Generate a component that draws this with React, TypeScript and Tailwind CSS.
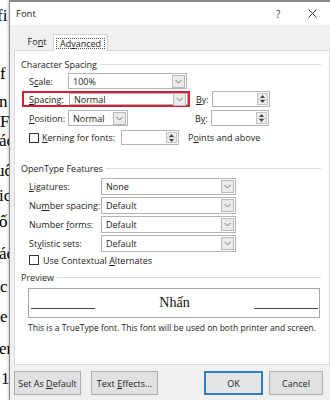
import React from "react";

const U = ({ children }: { children: React.ReactNode }) => (
  <span className="underline underline-offset-[1px]">{children}</span>
);

function Chevron() {
  return (
    <svg width="7" height="5" viewBox="0 0 7 5" className="block">
      <polyline points="0.5,1 3.5,4 6.5,1" fill="none" stroke="#777" strokeWidth="1" />
    </svg>
  );
}

function Combo({ w, text }: { w: string; text: string }) {
  return (
    <div className={`${w} h-full flex items-center border border-[#b4b4b4] bg-white`}>
      <div className="flex-1 pl-[4px] text-[#222]">{text}</div>
      <div className="h-[13px] w-[13px] mr-[1px] flex items-center justify-center border border-[#b9b9b9] bg-[#eaeaea]">
        <Chevron />
      </div>
    </div>
  );
}

function Spin({ w }: { w: string }) {
  return (
    <div className={`${w} h-full flex border border-[#b4b4b4] bg-white`}>
      <div className="flex-1" />
      <div className="w-[11px] my-[1px] mr-[1px] flex flex-col border border-[#c4c4c4] bg-[#ececec]">
        <div className="flex-1 flex items-center justify-center border-b border-[#c8c8c8]">
          <svg width="5" height="3" viewBox="0 0 5 3"><polygon points="0,3 2.5,0 5,3" fill="#444" /></svg>
        </div>
        <div className="flex-1 flex items-center justify-center">
          <svg width="5" height="3" viewBox="0 0 5 3"><polygon points="0,0 2.5,3 5,0" fill="#444" /></svg>
        </div>
      </div>
    </div>
  );
}

function Check() {
  return <div className="w-[10px] h-[10px] border border-[#333] bg-white shrink-0" />;
}

function GroupTitle({ children }: { children: React.ReactNode }) {
  return (
    <div className="flex items-center h-[12px] pl-[6px] pr-[8px]">
      <span className="text-[#1e1e1e]">{children}</span>
      <div className="flex-1 ml-[3px] h-px bg-[#dcdcdc]" />
    </div>
  );
}

function Btn({ children, w, primary }: { children: React.ReactNode; w: string; primary?: boolean }) {
  return (
    <div
      className={`${w} h-[24px] flex items-center justify-center text-[#1e1e1e] ${
        primary ? "border-2 border-[#2f7fbf] bg-[#e5e5e5]" : "border border-[#adadad] bg-[#e1e1e1]"
      }`}
    >
      <span className="whitespace-nowrap">{children}</span>
    </div>
  );
}

const docLines: { t: string; h: string; ml: string }[] = [
  { t: "fi", h: "h-[22px]", ml: "-ml-[3px]" },
  { t: "f", h: "h-[58px]", ml: "ml-0" },
  { t: "n :", h: "h-[28px]", ml: "-ml-[1px]" },
  { t: "Fo", h: "h-[20px]", ml: "ml-0" },
  { t: "ác", h: "h-[19px]", ml: "-ml-[1px]" },
  { t: "uô", h: "h-[30px]", ml: "-ml-[4px]" },
  { t: "ic", h: "h-[25px]", ml: "-ml-[1px]" },
  { t: "ố", h: "h-[26px]", ml: "-ml-[1px]" },
  { t: "ác", h: "h-[32px]", ml: "-ml-[1px]" },
  { t: "c", h: "h-[33px]", ml: "ml-0" },
  { t: "e", h: "h-[30px]", ml: "ml-0" },
  { t: "er", h: "h-[32px]", ml: "-ml-[1px]" },
  { t: "1", h: "h-[30px]", ml: "ml-[1px]" },
];

export default function App() {
  return (
    <div
      className="w-[330px] h-[400px] overflow-hidden bg-white flex text-[9px] leading-none"
      style={{ fontFamily: "'Open Sans', 'Noto Sans', sans-serif" }}
    >
      {/* document behind */}
      <div
        className="w-[9px] shrink-0 overflow-hidden bg-white text-black text-[17px] leading-none pt-[2px]"
        style={{ fontFamily: "'Liberation Serif', serif" }}
      >
        {docLines.map((l, i) => (
          <div key={i} className={`${l.h} ${l.ml} whitespace-nowrap flex items-end`}>
            {l.t}
          </div>
        ))}
      </div>

      {/* dialog */}
      <div className="w-[330px] shrink-0 flex flex-col border-l border-t-2 border-[#8a8a8a] bg-[#f0f0f0] shadow-[-1px_0_2px_rgba(0,0,0,0.2)]">
        {/* title bar */}
        <div className="h-[23px] shrink-0 flex items-center bg-white pl-[6px] text-[#222]">
          <span className="text-[9.5px]">Font</span>
          <div className="flex-1" />
          <span className="text-[10px] text-[#333] w-[10px]">?</span>
          <svg width="9" height="9" viewBox="0 0 9 9" className="ml-[22px]">
            <path d="M0.5 0.5 L8.5 8.5 M8.5 0.5 L0.5 8.5" stroke="#333" strokeWidth="1" />
          </svg>
          <div className="w-[22px]" />
        </div>

        {/* tabs */}
        <div className="h-[25px] shrink-0 flex items-end pl-[12px]">
          <div className="h-[15px] w-[30px] flex items-center justify-center text-[#222] mb-[1px]">
            Fo<U>n</U>t
          </div>
          <div className="h-[17px] ml-[1px] px-[2px] flex items-center bg-white border border-b-0 border-[#d0d0d0] -mb-px relative z-10">
            <div className="border border-dotted border-[#555] px-[3px] h-[11px] flex items-center text-[#222]">
              Ad<U>v</U>anced
            </div>
          </div>
        </div>

        {/* panel */}
        <div className="h-[315px] shrink-0 ml-[4px] w-[316px] bg-white border border-[#d9d9d9] flex flex-col pt-[7px] text-[#222]">
          <GroupTitle>Character Spacing</GroupTitle>

          {/* scale */}
          <div className="h-[16px] mt-[3px] flex items-center">
            <div className="w-[53px] pl-[14px]">S<U>c</U>ale:</div>
            <Combo w="w-[119px]" text="100%" />
          </div>

          {/* spacing with red highlight */}
          <div className="h-[16px] mt-[2px] flex items-center">
            <div className="w-[168px] h-[16px] ml-[7px] border-2 border-[#d51f2e] flex items-center">
              <div className="w-[45px] pl-[5px]"><U>S</U>pacing:</div>
              <Combo w="w-[119px]" text="Normal" />
            </div>
            <div className="w-[22px] pl-[6px]"><U>B</U>y:</div>
            <Spin w="w-[58px]" />
          </div>

          {/* position */}
          <div className="h-[16px] mt-[3px] flex items-center">
            <div className="w-[53px] pl-[14px]"><U>P</U>osition:</div>
            <Combo w="w-[60px]" text="Normal" />
            <div className="w-[22px] ml-[61px] pl-[6px]">B<U>y</U>:</div>
            <Spin w="w-[58px]" />
          </div>

          {/* kerning */}
          <div className="h-[15px] mt-[4px] flex items-center">
            <div className="pl-[14px] flex items-center w-[106px]">
              <Check />
              <span className="ml-[3px]"><U>K</U>erning for fonts:</span>
            </div>
            <Spin w="w-[58px]" />
            <span className="ml-[9px]">P<U>o</U>ints and above</span>
          </div>

          <div className="h-[17px]" />
          <GroupTitle>OpenType Features</GroupTitle>

          {[
            [<><U>L</U>igatures:</>, "None"],
            [<>Nu<U>m</U>ber spacing:</>, "Default"],
            [<>Number <U>f</U>orms:</>, "Default"],
            [<>St<U>y</U>listic sets:</>, "Default"],
          ].map(([l, v], i) => (
            <div key={i} className={`h-[17px] flex items-center ${i === 0 ? "mt-[4px]" : "mt-[2px]"}`}>
              <div className="w-[86px] pl-[14px]">{l}</div>
              <Combo w="w-[135px]" text={v as string} />
            </div>
          ))}

          <div className="h-[12px] mt-[2px] flex items-center pl-[14px]">
            <Check />
            <span className="ml-[4px]">Use Contextual <U>A</U>lternates</span>
          </div>

          <div className="h-[5px]" />
          <GroupTitle>Preview</GroupTitle>

          <div className="mt-[5px] ml-[13px] w-[292px] h-[30px] border border-[#a8a8a8] flex items-center">
            <div className="w-[64px] h-px bg-[#444] mt-[10px] ml-[2px]" />
            <div
              className="flex-1 text-center text-[14px] text-[#111]"
              style={{ fontFamily: "'Liberation Serif', serif" }}
            >
              Nhấn
            </div>
            <div className="w-[64px] h-px bg-[#444] mt-[10px] mr-[1px]" />
          </div>
          <div className="mt-[6px] ml-[13px] text-[8.5px] whitespace-nowrap">
            This is a TrueType font. This font will be used on both printer and screen.
          </div>
        </div>

        {/* buttons */}
        <div className="flex items-center mt-[6px] pl-[4px]">
          <Btn w="w-[67px]">Set As <U>D</U>efault</Btn>
          <div className="w-[10px]" />
          <Btn w="w-[67px]">Text <U>E</U>ffects...</Btn>
          <div className="w-[46px]" />
          <Btn w="w-[59px]" primary>OK</Btn>
          <div className="w-[6px]" />
          <Btn w="w-[54px]">Cancel</Btn>
        </div>
      </div>
    </div>
  );
}
